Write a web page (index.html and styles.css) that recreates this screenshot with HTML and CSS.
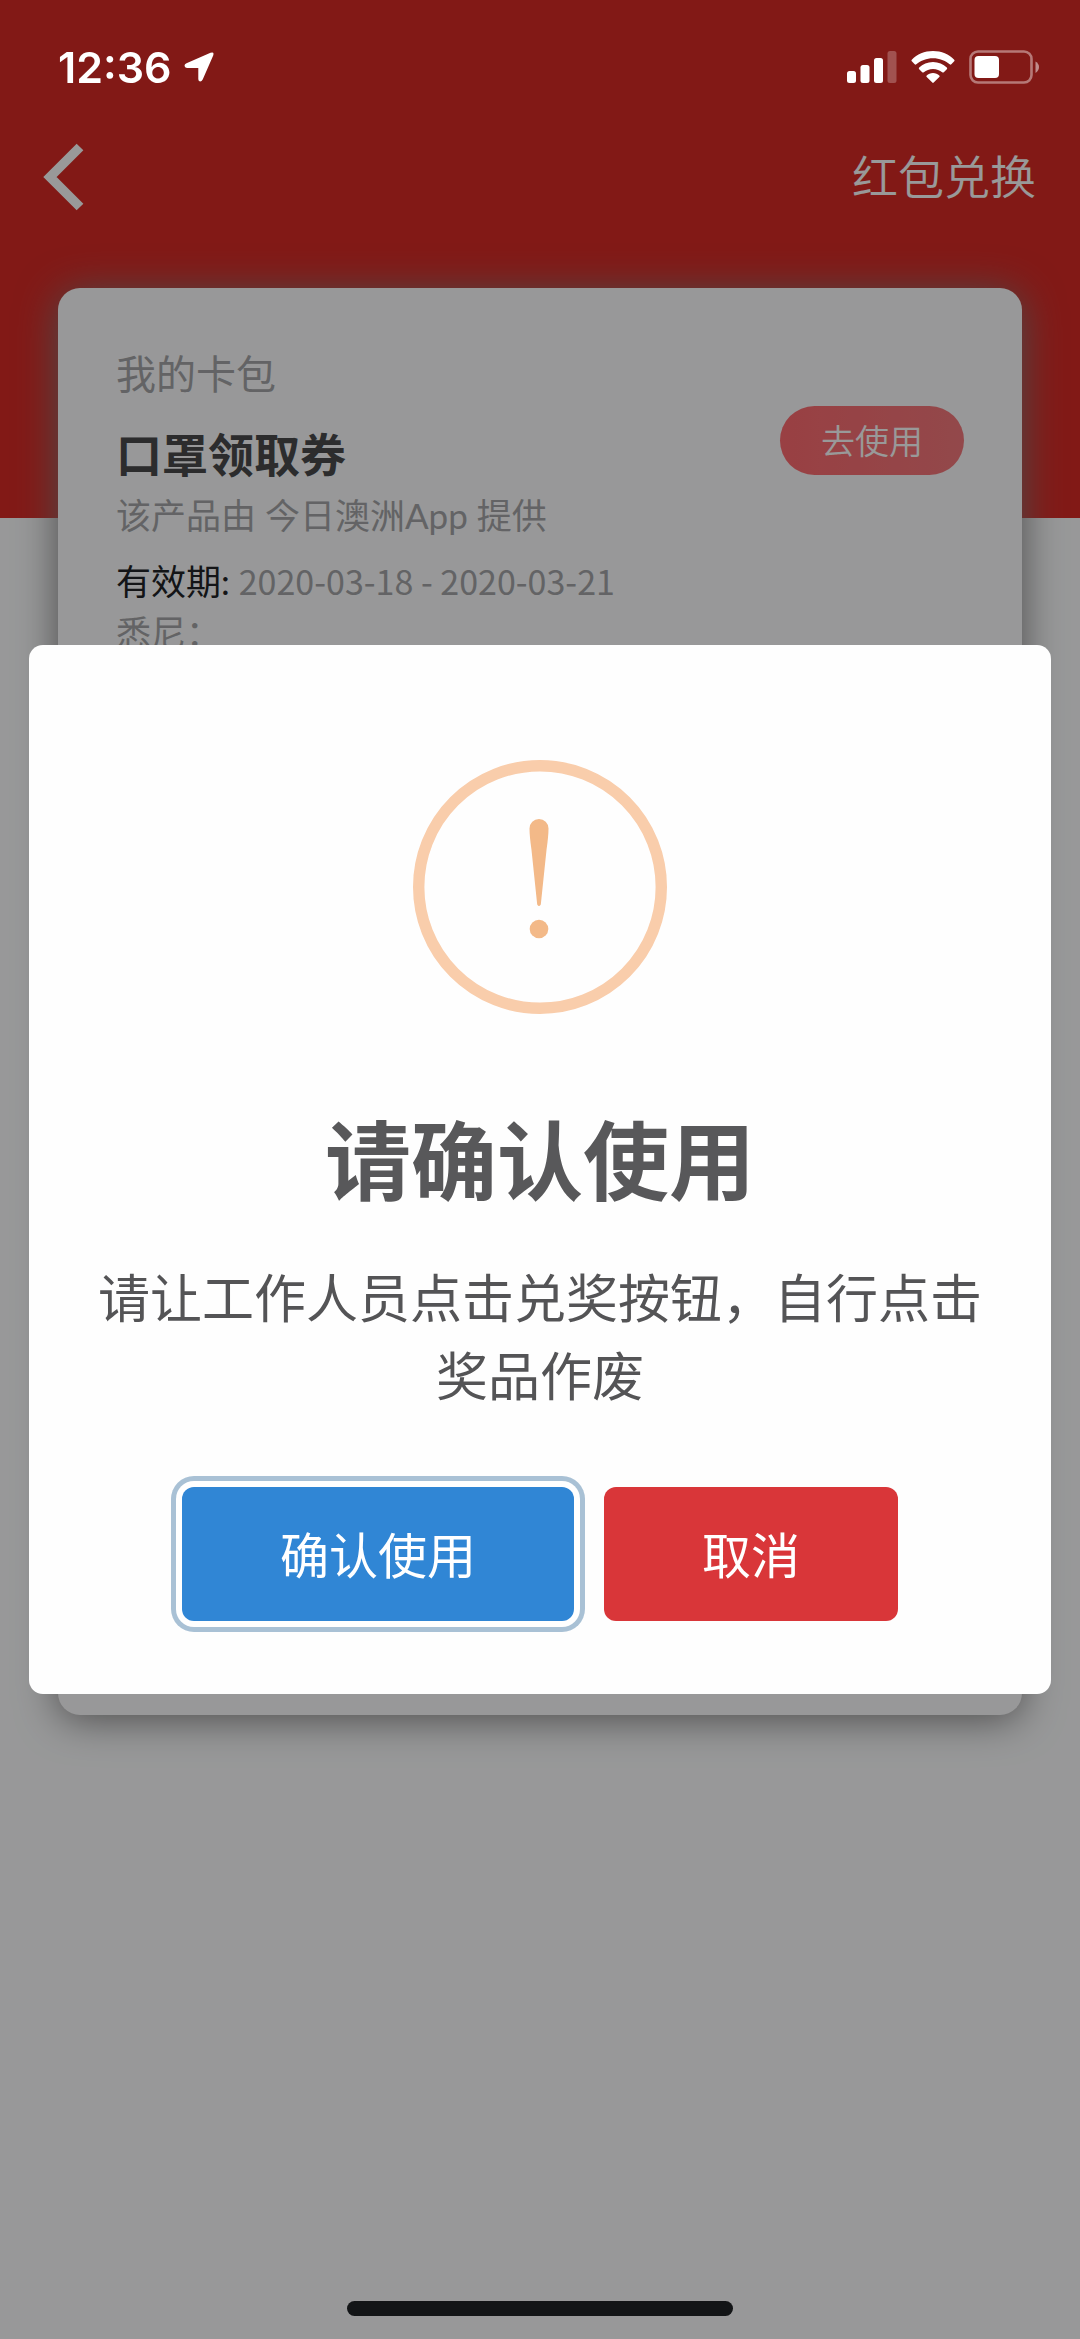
FILE: index.html
```
<!DOCTYPE html>
<html lang="zh-CN">
<head>
<meta charset="utf-8">
<meta name="viewport" content="width=device-width, initial-scale=1">
<title>红包兑换</title>
<link rel="stylesheet" href="styles.css">
</head>
<body>
<div class="status-bar">
  <div class="status-left">
    <span class="clock">12:36</span>
    <svg class="icon-location" viewBox="0 0 30 30" aria-hidden="true"><path d="M26.500 .7Q30.500 -.6 29.200 3.400L18.700 27.500Q17.500 29.800 15.500 29.300Q14.300 28.800 14.300 27V16H3Q.5 15.800.5 13.800Q.5 12 2.500 11.200Z" fill="#fff"/></svg>
  </div>
  <div class="status-right">
    <svg class="icon-signal" viewBox="0 0 50 32" aria-hidden="true"><g fill="#fff"><rect x="0" y="20" width="9" height="12" rx="2.500"/><rect x="13.500" y="14" width="9" height="18" rx="2.500"/><rect x="27" y="7" width="9" height="25" rx="2.500"/><rect x="40.500" y="0" width="9" height="32" rx="2.500" opacity=".25"/></g></svg>
    <svg class="icon-wifi" viewBox="0 0 44 32" aria-hidden="true"><path fill="#fff" d="M22 0C30.500 0 38 3.300 43.200 8.700Q43.900 9.500 43.200 10.300L40.300 13.300Q39.500 14 38.700 13.300C34.300 9.800 28.500 7.300 22 7.300S9.700 9.800 5.300 13.300Q4.500 14 3.700 13.300L.8 10.300Q.1 9.500.8 8.700C6 3.300 13.500 0 22 0ZM22 11C27.500 11 32.300 13.100 35.800 16.600Q36.500 17.400 35.800 18.200L32.800 21.200Q32 21.900 31.200 21.200C28.800 19.300 25.600 18 22 18S15.200 19.300 12.800 21.200Q12 21.900 11.200 21.200L8.200 18.200Q7.500 17.400 8.200 16.600C11.700 13.100 16.500 11 22 11ZM22 22C24.500 22 26.700 22.900 28.300 24.400Q29 25.200 28.300 26L22.700 31.600Q22 32.300 21.300 31.600L15.700 26Q15 25.200 15.700 24.400C17.300 22.900 19.500 22 22 22Z"/></svg>
    <svg class="icon-battery" viewBox="0 0 71 34" aria-hidden="true"><rect x="1.500" y="1.500" width="61" height="31" rx="7.500" fill="none" stroke="#fff" stroke-width="2.600" opacity=".42"/><rect x="5.500" y="6" width="24.500" height="22" rx="4" fill="#fff"/><path d="M66.500 11.500Q70 13.500 70 17T66.500 23Z" fill="#fff" opacity=".5"/></svg>
  </div>
</div>

<header class="hero">
  <nav class="nav-bar">
    <button class="back" type="button" aria-label="返回"><svg class="icon-back" viewBox="0 0 42 68" aria-hidden="true"><path d="M37 4L7 34L37 64" fill="none" stroke="#fff" stroke-width="9.500"/></svg></button>
    <a class="nav-link" href="#exchange">红包兑换</a>
  </nav>
</header>

<main class="card">
  <h1 class="card-heading">我的卡包</h1>
  <section class="coupon">
    <div class="coupon-info">
      <h2 class="coupon-title">口罩领取券</h2>
      <p class="coupon-text">该产品由 今日澳洲App 提供</p>
      <p class="coupon-text coupon-validity"><strong class="coupon-label">有效期:</strong> <span class="coupon-dates">2020-03-18 - 2020-03-21</span></p>
      <p class="coupon-text">悉尼：</p>
    </div>
    <button class="use-button" type="button">去使用</button>
  </section>
</main>

<div class="backdrop">
  <div class="dialog" role="alertdialog" aria-modal="true" aria-labelledby="dialog-title" aria-describedby="dialog-text">
    <svg class="icon-warning" viewBox="0 0 254 254" aria-hidden="true"><circle cx="127" cy="127" r="121.300" fill="none" stroke="#f9cdab" stroke-width="11.400"/><path d="M116.500 68.500A9.500 9.500 0 0 1 135.500 68.500Q135.500 76 133.500 90L127.800 144.500Q126 147.500 124.200 144.500L118.500 90Q116.500 76 116.500 68.500Z" fill="#f3b988"/><circle cx="126" cy="169" r="9.300" fill="#f3b988"/></svg>
    <h2 class="dialog-title" id="dialog-title">请确认使用</h2>
    <p class="dialog-text" id="dialog-text">请让工作人员点击兑奖按钮，自行点击奖品作废</p>
    <div class="dialog-actions">
      <button class="action confirm" type="button">确认使用</button>
      <button class="action cancel" type="button">取消</button>
    </div>
  </div>
</div>
<div class="home-indicator"></div>
</body>
</html>
```

FILE: styles.css
```
* {
  box-sizing: border-box;
}

body {
  margin: 0;
  min-height: 100vh;
  background: #fdfeff;
  font-family: Lato, "Noto Sans CJK SC", sans-serif;
}

h1,
h2,
p {
  margin: 0;
}

button {
  border: 0;
  font-family: inherit;
  cursor: pointer;
}

svg {
  display: block;
}

/* Device status bar, kept bright above the backdrop */
.status-bar {
  position: fixed;
  inset: 0 0 auto;
  z-index: 3;
  display: flex;
  justify-content: space-between;
  align-items: center;
  padding: 40px 40px 0 58px;
  height: 93px;
}

.status-left,
.status-right {
  display: flex;
  align-items: center;
}

.status-left {
  gap: 12px;
}

.status-right {
  gap: 14px;
}

.clock {
  color: #fff;
  font: 600 43px/52px Inter, sans-serif;
}

.icon-location {
  width: 30px;
  height: 30px;
}

.icon-signal {
  width: 50px;
  height: 32px;
}

.icon-wifi {
  width: 44px;
  height: 32px;
}

.icon-battery {
  width: 71px;
  height: 34px;
}

/* Red header */
.hero {
  height: 518px;
  padding: 132px 44px 0 43px;
  background: #d92b26;
}

.nav-bar {
  display: flex;
  justify-content: space-between;
  align-items: center;
  height: 90px;
}

.back {
  padding: 0;
  background: none;
}

.icon-back {
  width: 42px;
  height: 68px;
}

.nav-link {
  color: #fff;
  font-size: 46px;
  font-weight: 350;
  line-height: 60px;
  text-decoration: none;
}

/* Card */
.card {
  min-height: 61vh;
  margin: -230px 58px 0;
  padding: 56px 58px;
  border-radius: 22px;
  background: #fdfeff;
  box-shadow: 0 4px 40px #7e7e7e;
}

.card-heading {
  color: #a5a6a8;
  font-size: 40px;
  font-weight: 400;
  line-height: 60px;
}

.coupon {
  display: flex;
  justify-content: space-between;
  align-items: flex-start;
}

.coupon-info {
  padding-top: 16px;
}

.coupon-title {
  color: #4a4a4c;
  font-size: 46px;
  font-weight: 700;
  line-height: 70px;
}

.coupon-text {
  color: #a5a6a8;
  font-size: 35px;
  font-weight: 400;
  line-height: 51px;
}

.coupon-validity {
  padding-top: 14px;
}

.coupon-label {
  color: #222427;
  font-weight: 400;
}

.coupon-dates {
  font-family: "Noto Sans CJK SC", sans-serif;
  font-size: 34px;
}

.use-button {
  height: 69px;
  margin-top: 2px;
  padding: 0 41px 2px;
  border-radius: 35px;
  background: linear-gradient(90deg, #ff6b70, #f5797d);
  color: #fff;
  font-size: 34px;
  font-weight: 350;
}

/* Dialog */
.backdrop {
  position: fixed;
  inset: 0;
  z-index: 2;
  display: flex;
  align-items: center;
  justify-content: center;
  padding: 29px;
  background: rgba(0, 0, 0, 0.4);
}

.dialog {
  display: flex;
  flex-direction: column;
  align-items: center;
  width: 100%;
  padding: 115px 58px 73px;
  border-radius: 14px;
  background: #fefefe;
}

.icon-warning {
  width: 254px;
  height: 254px;
}

.dialog-title {
  padding-top: 82px;
  color: #58585a;
  font-size: 86px;
  font-weight: 700;
  line-height: 130px;
}

.dialog-text {
  padding-top: 33px;
  color: #545456;
  font-size: 52px;
  line-height: 78px;
  text-align: center;
}

.dialog-actions {
  display: flex;
  gap: 30px;
  padding-top: 72px;
}

.action {
  height: 134px;
  padding: 0 98px 4px;
  border-radius: 12px;
  color: #fff;
  font-size: 49px;
}

.confirm {
  background: #3086d5;
  box-shadow: 0 0 0 6px #fff, 0 0 0 11px #a9c1d5;
}

.cancel {
  background: #d93639;
}

.home-indicator {
  position: fixed;
  bottom: 23px;
  left: 50%;
  z-index: 3;
  width: 386px;
  height: 15px;
  margin-left: -193px;
  border-radius: 8px;
  background: #131517;
}
```
